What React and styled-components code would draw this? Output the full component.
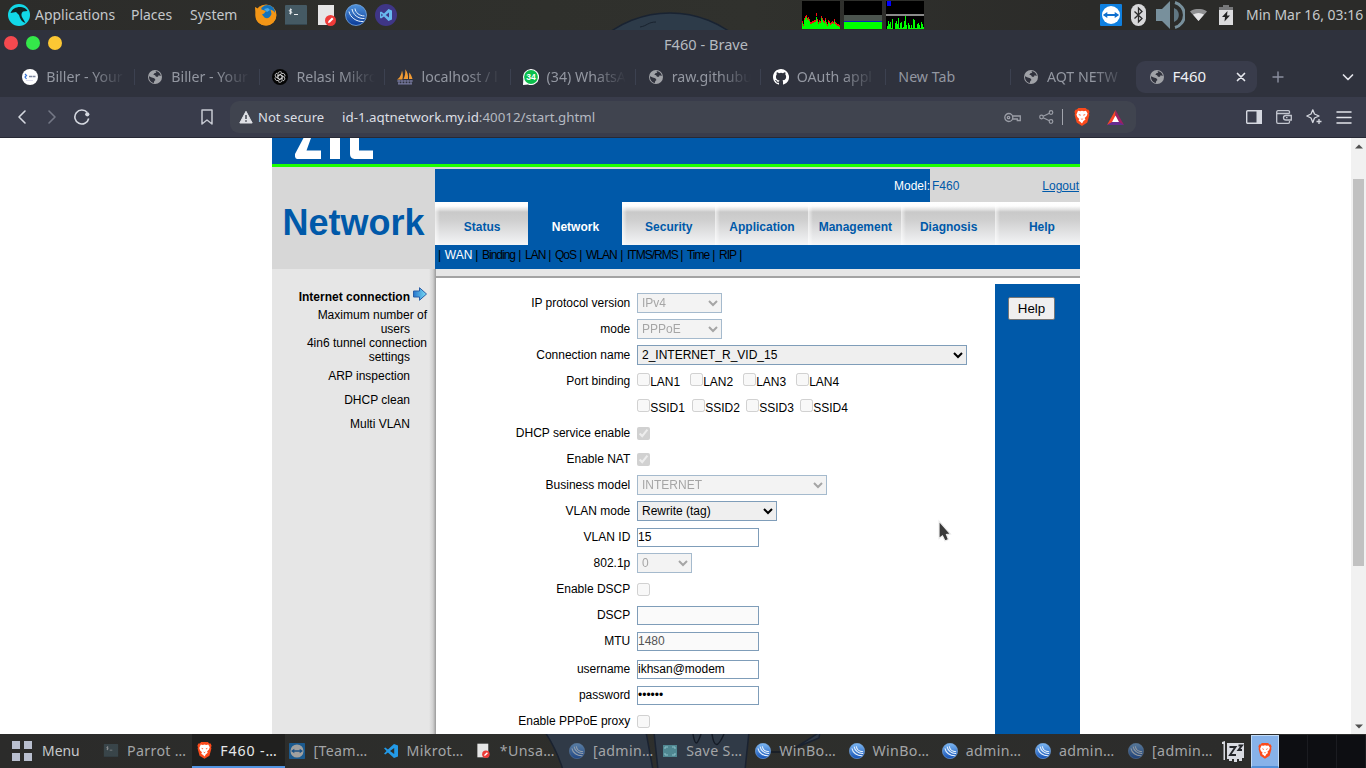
import React from 'react';
import styled, { createGlobalStyle, css } from 'styled-components';

const Global = createGlobalStyle`
  * { box-sizing: border-box; }
  body { margin: 0; overflow: hidden; background: #2d2e2b; }
`;
const ui = "'Noto Sans', sans-serif";
const web = "'Liberation Sans', Arial, sans-serif";

const Desktop = styled.div`
  width: 1366px; height: 768px; display: flex; flex-direction: column;
  font-family: ${ui}; position: relative; overflow: hidden;
`;
const Panel = styled.header`
  height: 30px; display: flex; align-items: center; position: relative;
  background: linear-gradient(90deg, #2c2c2a 0%, #2f302c 40%, #30312d 55%, #2b2b29 80%);
  color: #c5c8cb; font-size: 13.95px; padding: 0 4px 0 8px;
`;
const Wallpaper = styled.svg`position: absolute; left: 0; top: 0;`;
const PanelLogo = styled.span`display: flex; position: relative; flex: none;`;
const PanelMenu = styled.span`
  margin-left: ${p => p.$gap}px; width: ${p => p.$w}px; flex: none; white-space: nowrap; position: relative; line-height: 28px; padding-bottom: 1px;
`;
const Launchers = styled.div`display: flex; align-items: center; gap: 8px; margin-left: 17px; position: relative;`;
const PadSlot = styled.span`display: flex; width: 22px; padding-left: 3px; flex: none;`;
const Monitors = styled.div`display: flex; gap: 4px; position: relative; margin-left: auto; margin-right: 176px;`;
const Tray = styled.div`display: flex; align-items: center; position: relative; height: 30px;`;
const Clock = styled.span`margin-left: 13px; width: 116px; flex: none; white-space: nowrap; line-height: 28px; padding-bottom: 1px;`;

const Titlebar = styled.div`
  height: 30px; background: #2f323d; display: flex; align-items: flex-start; justify-content: center; position: relative;
  color: #b5bac0; font-size: 14.6px; padding-left: 46px; line-height: 28px;
`;
const Lights = styled.div`position: absolute; left: 4px; top: 6px; display: flex; gap: 8px;`;
const Light = styled.i`width: 14px; height: 14px; border-radius: 50%; background: ${p => p.$c};`;
const TabStrip = styled.nav`
  height: 37px; background: #2f323d; display: flex; padding: 1px 12px 4px 10.2px; align-items: center;
`;
const Tab = styled.div`
  width: ${p => (p.$active ? 121 : 125.1)}px; height: 32px;
  padding-left: ${p => (p.$active ? 12.5 : 12)}px; padding-right: ${p => (p.$active ? 11 : 10)}px; border-radius: 9px; display: flex; align-items: center; flex: none;
  color: ${p => (p.$active ? '#eef0f4' : '#9397a1')}; font-size: ${p => (p.$active ? 15 : 14.2)}px; position: relative;
  ${p => p.$active && css`background: #393c4b;`}
  ${p => p.$sep && css`&::after { content: ''; position: absolute; right: 0; top: 8px; height: 16px; width: 1px; background: #3c4150; }`}
`;
const TabTitle = styled.span`
  margin-left: ${p => (p.$bare ? 0.5 : 8)}px; flex: 1; overflow: hidden; white-space: nowrap; line-height: 29px; padding-bottom: 1px;
  ${p => p.$fade && css`mask-image: linear-gradient(90deg, #000 58%, transparent 100%);`}
`;
const StripTail = styled.div`display: flex; flex: 1; justify-content: space-between; padding-left: 15px; padding-top: 0;`;
const Toolbar = styled.div`
  height: 41px; background: #393c4b; border-bottom: 1px solid #272935; display: flex; align-items: center; padding: 0 14px;
`;
const NavIcons = styled.div`display: flex; width: 216px; align-items: center;`;
const Spacer = styled.div`width: ${p => p.$w}px; flex: none;`;
const UrlBar = styled.div`
  width: 906px; height: 32px; border-radius: 9px; background: #40444f; display: flex; align-items: center;
  padding: 0 12px 0 9px; color: #dcdfe4; font-size: 13.33px; line-height: 30px; white-space: nowrap;
`;
const Secure = styled.span`margin-left: 5px; width: 84px; font-size: 13px;`;
const Url = styled.span`flex: 1; span { color: #b5b9c1; }`;
const UrlIcons = styled.div`display: flex; align-items: center;`;
const Divider = styled.i`width: 1px; height: 16px; background: #a2a5ad; margin: 0 11px 0 8px;`;
const ToolIcons = styled.div`display: flex; gap: 14px; margin-left: auto; align-items: center;`;

const Viewport = styled.div`
  height: 596px; background: #fff; display: flex; justify-content: space-between; padding-left: 272px;
  font-family: ${web}; font-size: 12px; color: #000;
`;
const Site = styled.main`width: 808px; overflow: hidden;`;
const Banner = styled.div`height: 29px; background: #0059a9; border-bottom: 3px solid #1eff00; overflow: hidden; padding-left: 22.7px;`;
const Head = styled.div`height: 102px; background: #d7d7d7; display: flex; padding-top: 2px;`;
const HeadTitle = styled.h1`
  width: 163px; margin: 0; font-size: 36px; line-height: 100px; padding-top: 4px; text-align: center; color: #0059a9; font-weight: bold;
`;
const HeadMain = styled.div`width: 645px;`;
const ModelBar = styled.div`height: 33px; display: flex; color: #0059a9; line-height: 34px; justify-content: space-between; padding-right: 1px;`;
const ModelLabel = styled.span`width: 495px; background: #0059a9; color: #fff; text-align: right;`;
const ModelName = styled.span`flex: 1; padding-left: 2px;`;
const Logout = styled.a`text-decoration: underline;`;
const MainTabs = styled.div`height: 43px; display: flex; overflow: hidden;`;
const MainTab = styled.div`
  width: 93.3px; flex: none; text-align: center; font-weight: bold; line-height: 51px; padding-left: 1px; color: ${p => (p.$on ? '#fff' : '#0059a9')};
  background: ${p => (p.$on ? '#0059a9' : 'linear-gradient(90deg, rgba(255,255,255,.65), rgba(255,255,255,0) 5px), linear-gradient(#fff 0, #fdfdfd 4px, #dedede 8px, #c9c9c9 10px, #cfcfcf 18px, #f4f5f7 43px)')};
`;
const SubTabs = styled.div`height: 24px; background: #0059a9; display: flex; padding-left: 3px; line-height: 20px;`;
const SubTab = styled.span`
  width: ${p => p.$w}px; flex: none; display: flex; justify-content: space-between; letter-spacing: ${p => (p.$on ? 0 : -1)}px;
  color: ${p => (p.$on ? '#fff' : '#000')}; padding-right: 3.5px; white-space: nowrap;
  &::after { content: '|'; color: #000; letter-spacing: 0; }
`;
const Pipe = styled.span`width: 6.800px; flex: none;`;
const Body = styled.div`height: 465px; display: flex; background: #e6e6e6;`;
const Side = styled.aside`width: 164px; padding-top: 15px; background: linear-gradient(90deg, #e6e6e6 157px, #d0d0d0 161px, #9a9a9a 164px);`;
const SideItem = styled.div`
  height: ${p => (p.$two ? 28 : 24)}px; line-height: ${p => (p.$two ? 14 : p.$bold ? 26 : 24)}px; width: 138px;
  text-align: right; white-space: nowrap; position: relative; font-weight: ${p => (p.$bold ? 'bold' : 'normal')};
`;
const Overhang = styled.div`margin-right: -17px;`;
const Arrow = styled.svg`position: absolute; left: 141px; top: 3px;`;
const Content = styled.section`flex: 1; padding-top: 7px; display: flex; flex-direction: column;`;
const Sheet = styled.div`flex: 1; border-top: 2px solid #a3a3a3; background: #fff; display: flex;`;
const Form = styled.div`width: 559px; padding-top: 12px;`;
const HelpPane = styled.div`width: 85px; margin-top: 6px; background: #0059a9; padding: 13px;`;
const HelpButton = styled.button`
  width: 47px; height: 23px; padding: 0; font: 13.33px ${web}; background: #efefef; border: 1px solid #767676; border-radius: 2px; display: block;
`;
const Field = styled.div`height: 26px; display: flex; align-items: center; margin-top: ${p => (p.$gap ? 2 : 0)}px;`;
const Label = styled.label`width: 194.300px; margin-right: 6.700px; flex: none; text-align: right; line-height: 26px;`;
const Select = styled.select`
  width: ${p => p.$w}px; height: 20px; border: 1px solid #7f9db9; border-radius: 0; background-color: #efefef; font: 12px ${web}; margin: 0; padding: 0;
`;
const Input = styled.input`
  width: 122px; height: 19px; border: 1px solid #7f9db9; font: 12px ${web}; padding: 0 0 1px 0; margin: 1px 0 0; color: #000;
  background: #fff;
  &:disabled { background: #fafafa; color: #545454; }
`;
const Check = styled.input.attrs({ type: 'checkbox', disabled: true, readOnly: true })`
  width: 13px; height: 13px; margin: ${p => (p.$raised ? '0 0.2px 5px 0' : '1px 0 0')}; flex: none;
`;
const Option = styled.span`width: ${p => p.$w}px; display: flex; align-items: center; line-height: 26px; padding-top: 2px;`;
const Scrollbar = styled.div`width: 15px; background: #f1f1f1; display: flex; flex-direction: column; align-items: center; padding: 6px 0 5px;`;
const Thumb = styled.div`width: 11px; height: 387px; margin: 30px 0 auto; background: #c1c1c1;`;

const Taskbar = styled.footer`
  height: 34px; display: flex; position: relative; color: #c5c8cb; font-size: 14.2px;
  background: linear-gradient(90deg, #2b2b2a, #2e2f2c 50%, #2c2c2b 90%);
`;
const MenuButton = styled.div`width: 99px; flex: none; display: flex; align-items: center; padding-left: 12px; gap: 10px; position: relative; line-height: 31px; font-size: 13.95px; span { padding-bottom: 2px; }`;
const Task = styled.div`
  width: 93.2px; height: 34px; padding-left: 4px; display: flex; align-items: center; gap: 8px; flex: none; position: relative; white-space: nowrap;
  color: ${p => (p.$on ? '#e6e8ea' : '#a3a5a7')}; border-bottom: 2px solid ${p => (p.$on ? '#5294e2' : 'transparent')};
  background: ${p => (p.$on ? '#20201f' : 'transparent')}; line-height: 31px; padding-top: 1px;
  letter-spacing: ${p => (p.$on ? 0.9 : 0.35)}px;
  svg { opacity: ${p => (p.$dim ? 0.55 : 1)}; }
`;
const Zz = styled.div`width: 29px; flex: none; margin-left: 4.600px; display: flex; align-items: center; position: relative;`;
const Workspace = styled.div`
  width: ${p => (p.$on ? 28 : 29)}px; height: 33px; margin-top: 1px; position: relative; display: flex; justify-content: center; align-items: center; flex: none;
  background: ${p => (p.$on ? '#87b2e9' : '#0d0e12')}; border: ${p => (p.$on ? '1px solid #c2dbf6' : '0')};
  border-bottom: ${p => (p.$on ? '2px solid #4f8ed8' : '0')};
  border-right: ${p => (p.$on ? '1px solid #c2dbf6' : '1px solid #1b1c21')};
`;
const Cursor = styled.svg`position: absolute; left: 936px; top: 519px;`;

/* ---------- icons ---------- */
const Brave = ({ s = 16 }) => (
  <svg width={s} height={s * 1.12} viewBox="0 0 16 18">
    <path d="M4.400 0h7.200l1.500 1.600 1.500.1 1 2.200-.6 1.700.4 1.400-2.100 7.700L8 18l-5.300-3.300L.6 7 1 5.600.4 3.900l1-2.200 1.500-.1z" fill="#fb4a1b" />
    <path d="M4 2.800l2.200.5L8 2.700l1.800.6 2.200-.5 1.600 2.700-.9 2.600-2 2 .8 1.500-2 1.400L8 15.600l-1.500-1.600-2-1.400.8-1.500-2-2-.9-2.600z" fill="#fff" />
    <path d="M4.300 6.100l2.400.8-.5 1.100zM11.700 6.100l-2.400.8.5 1.100zM6.600 10.300L8 11l1.400-.7L8 12z" fill="#fb4a1b" />
  </svg>
);
const Globe = () => (
  <svg width="16" height="16" viewBox="0 0 16 16">
    <circle cx="8" cy="8" r="7" fill="#a0a2a7" />
    <path d="M8.500 2c2.600.1 5 2.300 5.300 5l-2.200-.7-.6 1.500-2-.1-.9-1.500-1.800-.5 1.400-1.600 1.600-.4zM2 7.200l2.800 1.300 2.500.8 1.200 1.700-1.200 1-.5 1.900C4.100 13.600 2 11 2 8z" fill="#30323d" />
  </svg>
);
const Winbox = ({ s = 16, deep }) => {
  const id = deep ? 'wbDeep' : 'wb';
  return (
    <svg width={s} height={s} viewBox="0 0 22 22">
      <defs><linearGradient id={id} x1="0" y1="0" x2="0" y2="1"><stop offset="0" stopColor={deep ? '#4f93dc' : '#7cb8f4'} /><stop offset="1" stopColor={deep ? '#0a3a96' : '#1450b4'} /></linearGradient></defs>
      <circle cx="11" cy="11" r="10.500" fill={`url(#${id})`} stroke="#79a9e0" strokeWidth=".8" />
      <path d="M4 7.500c1 5.500 7 10.500 14.500 10M7 5c1 5.500 6 10 12.500 9.500M10 4.500c.5 4 4 7.300 9.500 7.500" fill="none" stroke="#e8f3ff" strokeWidth={deep ? 1 : 1.4} />
    </svg>
  );
};
const Pad = ({ w = 18, h = 22 }) => (
  <svg width={w} height={h} viewBox="0 0 18 22">
    <path d="M0 1h16v20H0z" fill="#e6e6e6" /><circle cx="12.500" cy="16.500" r="5.500" fill="#ee3b38" />
    <path d="M10 19l.5-2 3.500-3.500 1.500 1.500-3.500 3.500z" fill="#fff" />
  </svg>
);
const Term = ({ s = 22, h = 20 }) => (
  <svg width={s} height={h} viewBox="0 0 22 20">
    <rect width="22" height="20" rx="1" fill="#455a64" /><path d="M0 19h22v1H0z" fill="#34464f" />
    <path d="M7 4.800H5.200c-1.200 0-1.200 1.700 0 1.700h.7c1.200 0 1.200 1.700 0 1.700H4.200M5.600 3.500v6M9 9.500h4" stroke="#eceff1" fill="none" />
  </svg>
);
const Teamv = ({ s = 22 }) => (
  <svg width={s} height={s} viewBox="0 0 22 22">
    <rect width="22" height="22" rx="1" fill="#0f80e0" /><circle cx="11" cy="11" r="9" fill="#fff" />
    <path d="M2.800 11l4.500-3v2h7.400V8l4.500 3-4.500 3v-2H7.300v2z" fill="#0f6fce" />
  </svg>
);
const Line = ({ d, w = 16, h = w, vb = '0 0 16 16', c = '#d5d8e0', sw = 1.4, fill = 'none' }) => (
  <svg width={w} height={h} viewBox={vb} fill={fill} stroke={c} strokeWidth={sw} strokeLinecap="round" strokeLinejoin="round"><path d={d} /></svg>
);
const Vs = ({ s = 14 }) => (
  <svg width={s} height={s} viewBox="0 0 14 14"><path d="M10 0l4 1.500v11L10 14 3.900 8.500 1.300 10.500 0 9.800 2.500 7 0 4.200l1.300-.7 2.600 2zM10.200 4L6 7l4.200 3z" fill="#239ae8" fillRule="evenodd" /></svg>
);
const IconBox = styled.span`width: 16px; display: flex; justify-content: center;`;

const cpu = [6, 3, 9, 11, 12, 9, 10, 8, 5, 5, 6, 6, 7, 7, 14, 8, 5, 7, 6, 11, 9, 7, 6, 9, 5, 3, 7, 6, 4, 5, 6, 5, 8, 5, 4, 3, 3, 2];
const net = [0, 3, 8, 5, 7, 1, 10, 0, 0, 6, 8, 5, 11, 1, 6, 7, 1, 2, 8, 13, 4, 0, 6, 4, 1, 4, 1, 10, 9, 1, 1, 5, 6, 4, 1, 7, 5, 2];

const tabs = [
  ['Biller - Your', <svg width="16" height="16"><circle cx="8" cy="8" r="8" fill="#fff" /><path d="M3 5l1.500 1.500L3 8l1.500 2" stroke="#3875d7" fill="none" strokeWidth="1.200" /><path d="M7 7.500h7" stroke="#7d86a0" strokeWidth="1.300" strokeDasharray="3 .5" /><path d="M4 11.500h7" stroke="#dde" /></svg>],
  ['Biller - Your', <Globe />],
  ['Relasi Mikro', <svg width="16" height="16" viewBox="0 0 16 16"><circle cx="8" cy="8" r="8" fill="#050505" /><g fill="none" stroke="#dedede" strokeWidth=".8">{[0, 60, 120, 180, 240, 300].map(a => <path key={a} transform={`rotate(${a} 8 8)`} d="M6 8V4.500a2.200 2.200 0 0 1 4-.8M8 5.700l3 1.700" />)}</g></svg>],
  ['localhost / l', <svg width="16" height="16" viewBox="0 0 16 16"><path d="M0 10.500C3 9 4.500 5 5 1.500c1 3 1.200 6 .4 9zM6.500 10C8 7 8.500 4 8.300.2 10.500 3 11.400 6 11 10zM12 10l.2-6.500C14 5.500 15 8 15.500 10z" fill="#f29b34" /><path d="M0 12h16M1 14.800h14M2 11v4.500M5 11v4.500M8 11v4.500M11 11v4.500M14 11v4.500" stroke="#77799f" strokeWidth="1.200" /></svg>],
  ['(34) WhatsA', <svg width="16" height="16" viewBox="0 0 16 16"><path d="M0 16l.3-6A8 8 0 1 1 5 15.400z" fill="#fff" /><circle cx="8" cy="8" r="6.900" fill="#0cbf4c" /><text x="8" y="11" fontSize="8.500" fontWeight="bold" fontFamily="Liberation Sans" textAnchor="middle" fill="#fff">34</text></svg>],
  ['raw.githubu', <Globe />],
  ['OAuth appl', <svg width="16" height="16" viewBox="0 0 16 16"><path fill="#fff" d="M8 0C3.580 0 0 3.580 0 8c0 3.540 2.290 6.530 5.470 7.590.4.070.55-.17.55-.38v-1.490c-2.010.37-2.530-.49-2.690-.94-.09-.23-.48-.94-.82-1.130-.28-.15-.68-.52-.01-.53.63-.01 1.080.58 1.230.82.72 1.210 1.870.87 2.330.66.07-.52.28-.87.51-1.070-1.780-.2-3.640-.89-3.640-3.950 0-.87.31-1.590.82-2.150-.08-.2-.36-1.020.08-2.120 0 0 .67-.21 2.200.82a7.600 7.600 0 0 1 4 0c1.530-1.040 2.200-.82 2.200-.82.44 1.100.16 1.920.08 2.120.51.56.82 1.270.82 2.150 0 3.070-1.870 3.750-3.650 3.950.29.25.54.73.54 1.480v2.200c0 .21.15.46.55.38A8 8 0 0 0 8 0z" /></svg>],
  ['New Tab', null],
  ['AQT NETW', <Globe />],
];
const tasks = [
  ['Parrot …', <Term s={16} h={13} />, 1], ['F460 -…', <IconBox><Brave s={15} /></IconBox>, 0], ['[Team…', <Teamv s={16} />, 1],
  ['Mikrot…', <IconBox><Vs s={14} /></IconBox>, 0], ['*Unsa…', <IconBox><Pad w={13} h={15} /></IconBox>, 0], ['[admin…', <Winbox />, 1],
  ['Save S…', <svg width="16" height="16"><path d="M1 2h14v12H1z" fill="#4f8791" /><path d="M3 6V4h3M10 4h3v2M3 10v2h3M10 12h3v-2" stroke="#8cc2ca" fill="none" /></svg>, 0],
  ['WinBo…', <Winbox />, 0], ['WinBo…', <Winbox />, 0], ['admin…', <Winbox />, 0], ['admin…', <Winbox />, 0], ['[admin…', <Winbox />, 1],
];

const Row = ({ label, gap, children }) => <Field $gap={gap}><Label>{label}</Label>{children}</Field>;
const Pick = ({ w, value, off }) => <Select $w={w} disabled={off}><option>{value}</option></Select>;

export default function App() {
  return (
    <Desktop>
      <Global />
      <Panel>
        <Wallpaper width="1366" height="30"><circle cx="670" cy="117" r="104" fill="#2d3b49" stroke="#192332" strokeWidth="1.500" /><path d="M640 27c7-1 8-5 16-5" stroke="#18222e" fill="none" /></Wallpaper>
        <PanelLogo><svg width="22" height="22" viewBox="0 0 22 22"><circle cx="11" cy="11" r="11" fill="#12d8e8" /><path d="M2.500 9C4 4.500 9 2.500 13 3c3 .3 5.500 2 6.500 4l-4.500.5c-2 1.500-2 4-.5 6.500l3 5c-3.500-1-5.500-4-6.500-8L8 8z" fill="#102324" /></svg></PanelLogo>
        <PanelMenu $gap={5} $w={80}>Applications</PanelMenu>
        <PanelMenu $gap={16} $w={43}>Places</PanelMenu>
        <PanelMenu $gap={16} $w={48}>System</PanelMenu>
        <Launchers>
          <svg width="22" height="22" viewBox="0 0 22 22"><circle cx="11" cy="11" r="10.500" fill="#f39616" /><circle cx="12.500" cy="8.500" r="7.500" fill="#1273bd" /><path d="M0 3l3 1.500L5 2l1.500 3.500L11 7 9 9.500l-2 1 2.500 3c3 2 6-.5 7-3.500l-1-4.500 3 1.500L21 10c1 6-4 11.500-10 11.500S0 17 .5 11z" fill="#f39616" /><path d="M9 5l4-1 2 2-3 2zM15 12l3-3" fill="#49a9e5" /></svg>
          <Term />
          <PadSlot><Pad /></PadSlot>
          <Winbox s={22} deep />
          <svg width="22" height="22" viewBox="0 0 22 22"><circle cx="11" cy="11" r="11" fill="#3f3686" /><path d="M13.500 5l3.500 1.500v9L13.500 17 9 12.500 6 14.500l-1-.7V8.200l1-.7 3 2zM6.300 9.500v3L8 11zM14 8.500L10.700 11l3.300 2.500z" fill="#68b9ee" fillRule="evenodd" /></svg>
        </Launchers>
        <Monitors>
          <svg width="38" height="28" shapeRendering="crispEdges"><rect width="38" height="28" fill="#000" />{cpu.map((v, i) => <g key={i}><rect x={i} y={28 - v - 2} width="1" height="3" fill="#f01010" /><rect x={i} y={28 - v + (i === 14 ? 2 : 0)} width="1" height={v} fill="#0f0" /></g>)}</svg>
          <svg width="38" height="28" shapeRendering="crispEdges"><rect width="38" height="28" fill="#000" /><rect y="14" width="38" height="6" fill="#4b544e" /><rect y="20" width="38" height="1" fill="#1020c0" /><rect y="21" width="38" height="7" fill="#0f0" /></svg>
          <svg width="38" height="28" shapeRendering="crispEdges"><rect width="38" height="28" fill="#000" /><rect x="1" width="4" height="5" fill="#00f" /><rect y="13" width="38" height="2" fill="#8a8a8a" />{net.map((v, i) => <rect key={i} x={i} y={28 - v} width="1" height={v} fill="#0f0" />)}</svg>
        </Monitors>
        <Tray>
          <Teamv />
          <Spacer $w={9} />
          <svg width="15" height="22" viewBox="0 0 15 22"><rect width="15" height="22" rx="7.500" fill="#d8d8da" /><path d="M3.500 7.500l7.500 7-3.500 3.500V4l3.500 3.500-7.500 7" fill="none" stroke="#2b2b2b" strokeWidth="1.300" /></svg>
          <Spacer $w={10} />
          <svg width="29" height="28" viewBox="0 0 29 28"><path d="M0 8h6l8-8v28l-8-8H0z" fill="#78909c" /><path d="M18 7a7.500 7.500 0 0 1 0 14z" fill="#607783" /><path d="M19 1.500a13 13 0 0 1 0 25" stroke="#78909c" strokeWidth="3" fill="none" /></svg>
          <Spacer $w={5} />
          <svg width="17" height="12" viewBox="0 0 17 12"><path d="M0 2.500C5-1 12-1 17 2.500L8.500 12z" fill="#8f9092" /><path d="M3 5.500C6.500 3.500 10.500 3.500 14 5.500L8.500 12z" fill="#e4e4e6" /></svg>
          <Spacer $w={12} />
          <svg width="14" height="20" viewBox="0 0 14 20"><path d="M4 0h6v2h4v4H0V2h4z" fill="#77787a" /><path d="M0 5h14v15H0z" fill="#dcdcde" /><path d="M8.500 6L3 12h3l-.5 4.500L11 10.500H8z" fill="#222" /></svg>
          <Clock>Min Mar 16, 03:16</Clock>
        </Tray>
      </Panel>

      <Titlebar>
        <Lights><Light $c="#f5494f" /><Light $c="#34e84a" /><Light $c="#fcc734" /></Lights>
        F460 - Brave
      </Titlebar>
      <TabStrip>
        {tabs.map(([t, icon], i) => <Tab key={i} $sep={i < 8}>{icon}<TabTitle $fade={i !== 7} $bare={!icon}>{t}</TabTitle></Tab>)}
        <Tab $active><Globe /><TabTitle>F460</TabTitle><Line w={10} vb="0 0 10 10" d="M1.500 1.500l7 7M8.500 1.500l-7 7" sw={1.700} c="#e6e8ee" /></Tab>
        <StripTail><Line w={12} vb="0 0 12 12" d="M6 1v10M1 6h10" c="#8c90a0" /><Line w={12} vb="0 0 12 12" d="M1.500 4L6 8.500 10.500 4" c="#e0e2e8" sw={1.700} /></StripTail>
      </TabStrip>
      <Toolbar>
        <NavIcons>
          <Line d="M11 2L5 8l6 6" sw={1.600} />
          <Spacer $w={14} />
          <Line d="M5 2l6 6-6 6" c="#747886" sw={1.600} />
          <Spacer $w={14} />
          <svg width="16" height="16" viewBox="0 0 16 16"><path d="M13.300 3.600A7 7 0 1 0 14.700 9.500" fill="none" stroke="#d5d8e0" strokeWidth="1.600" /><circle cx="13.300" cy="5.300" r="2.100" fill="#d5d8e0" /></svg>
          <Spacer $w={109} />
          <Line d="M3 1h10v14l-5-4-5 4z" c="#c6c9d2" sw={1.500} />
        </NavIcons>
        <UrlBar>
          <svg width="14" height="14" viewBox="0 0 14 14"><path d="M7 1.300L13.200 13H.8z" fill="#dfe1e6" stroke="#dfe1e6" strokeLinejoin="round" /><path d="M7 5v4M7 10.300v1.400" stroke="#40444f" strokeWidth="1.500" /></svg>
          <Secure>Not secure</Secure>
          <Url>id-1.aqtnetwork.my.id<span>:40012/start.ghtml</span></Url>
          <UrlIcons>
            <svg width="17" height="11" viewBox="0 0 17 11" fill="none" stroke="#9a9da6" strokeWidth="1.300"><circle cx="4.800" cy="5.500" r="4" /><circle cx="4.500" cy="5.500" r="1.200" /><path d="M8.500 4h7.800v4.500h-3V7h-4.800" /></svg>
            <Spacer $w={18} />
            <svg width="15" height="14" viewBox="0 0 15 14" fill="none" stroke="#9a9da6" strokeWidth="1.200"><circle cx="2.500" cy="7" r="1.800" /><circle cx="12" cy="2.500" r="1.800" /><circle cx="12" cy="11.500" r="1.800" /><path d="M4.200 6.200L10.400 3.300M4.200 7.800l6.200 2.900" /></svg>
            <Divider />
            <Brave s={16} />
            <Spacer $w={17} />
            <svg width="17" height="15" viewBox="0 0 17 15"><path d="M8.500 0L0 15l8.500-4z" fill="#fa4628" /><path d="M8.500 0L17 15l-8.500-4z" fill="#9e1f63" /><path d="M0 15h17l-8.500-5z" fill="#662d91" /><path d="M8.500 5.500L12 12H5z" fill="#fff" /></svg>
          </UrlIcons>
        </UrlBar>
        <ToolIcons>
          <svg width="16" height="14" viewBox="0 0 16 14"><rect x=".7" y=".7" width="14.600" height="12.600" rx="1" fill="none" stroke="#d5d8e0" strokeWidth="1.400" /><path d="M10.500 0H16v14h-5.500z" fill="#d5d8e0" /></svg>
          <svg width="16" height="14" viewBox="0 0 16 14" fill="none" stroke="#c3c6cf" strokeWidth="1.300"><path d="M13.500 3.500V2q0-1.300-1.300-1.300H2Q.7.700.7 2.200V12Q.7 13.300 2 13.300h10.200q1.300 0 1.300-1.300v-1M.7 3.500h12.800M15.300 5.500H10q-2.500 0-2.500 2.200T10 10h5.300zM10 7.700h1.500" /></svg>
          <svg width="16" height="16" viewBox="0 0 16 16" fill="none" stroke="#d5d8e0" strokeWidth="1.300" strokeLinejoin="round"><path d="M6.800.8L8.500 5l4.500 2-4.500 2-1.700 4.500L5 9 .8 7 5 5zM13 10v5M10.500 12.500h5" /></svg>
          <Line w={16} h={14} vb="0 0 16 14" d="M1 2h14M1 7.500h14M1 13h14" c="#e2e4ea" sw={1.500} />
        </ToolIcons>
      </Toolbar>

      <Viewport>
        <Site>
          <Banner>
            <svg width="80" height="26"><path d="M8.500 0h7.500l-4.500 12.500h14.500V21H2q-2.500-.5-2-5zM35 0h10v21H35zM55 0h9v12.500h14V21H59.500q-4.500-.5-4.500-5z" fill="#fff" /></svg>
          </Banner>
          <Head>
            <HeadTitle>Network</HeadTitle>
            <HeadMain>
              <ModelBar><ModelLabel>Model:</ModelLabel><ModelName>F460</ModelName><Logout>Logout</Logout></ModelBar>
              <MainTabs>{['Status', 'Network', 'Security', 'Application', 'Management', 'Diagnosis', 'Help'].map(t => <MainTab key={t} $on={t === 'Network'}>{t}</MainTab>)}</MainTabs>
              <SubTabs>
                <Pipe>|</Pipe>
                {[['WAN', 37.2], ['Binding', 43], ['LAN', 30], ['QoS', 31], ['WLAN', 41], ['ITMS/RMS', 60], ['Time', 32], ['RIP', 27]].map(([t, w]) => <SubTab key={t} $w={w} $on={t === 'WAN'}>{t}</SubTab>)}
              </SubTabs>
            </HeadMain>
          </Head>
          <Body>
            <Side>
              <SideItem $bold>Internet connection
                <Arrow width="14" height="14" viewBox="0 0 14 14"><defs><linearGradient id="ar"><stop offset="0" stopColor="#2674cc" /><stop offset="1" stopColor="#7be0f5" /></linearGradient></defs><path d="M.5 4h6V.7L13.500 7l-7 6.300V10h-6z" fill="url(#ar)" stroke="#2a5fa8" /></Arrow>
              </SideItem>
              <SideItem $two><Overhang>Maximum number of</Overhang>users</SideItem>
              <SideItem $two><Overhang>4in6 tunnel connection</Overhang>settings</SideItem>
              <SideItem>ARP inspection</SideItem>
              <SideItem>DHCP clean</SideItem>
              <SideItem>Multi VLAN</SideItem>
            </Side>
            <Content>
              <Sheet>
                <Form>
                  <Row label="IP protocol version"><Pick w={85} value="IPv4" off /></Row>
                  <Row label="mode"><Pick w={85} value="PPPoE" off /></Row>
                  <Row label="Connection name"><Pick w={330} value="2_INTERNET_R_VID_15" /></Row>
                  <Row label="Port binding">{[1, 2, 3, 4].map(n => <Option key={n} $w={53}><Check $raised />LAN{n}</Option>)}</Row>
                  <Row>{[1, 2, 3, 4].map(n => <Option key={n} $w={n === 1 ? 55 : 54}><Check $raised />SSID{n}</Option>)}</Row>
                  <Row label="DHCP service enable"><Check checked /></Row>
                  <Row label="Enable NAT"><Check checked /></Row>
                  <Row label="Business model"><Pick w={190} value="INTERNET" off /></Row>
                  <Row label="VLAN mode"><Pick w={140} value="Rewrite (tag)" /></Row>
                  <Row label="VLAN ID"><Input defaultValue="15" /></Row>
                  <Row label="802.1p"><Pick w={55} value="0" off /></Row>
                  <Row label="Enable DSCP"><Check /></Row>
                  <Row label="DSCP"><Input disabled /></Row>
                  <Row label="MTU"><Input disabled defaultValue="1480" /></Row>
                  <Row label="username" gap><Input defaultValue="ikhsan@modem" /></Row>
                  <Row label="password"><Input type="password" defaultValue="secret" /></Row>
                  <Row label="Enable PPPoE proxy"><Check /></Row>
                </Form>
                <HelpPane><HelpButton>Help</HelpButton></HelpPane>
              </Sheet>
            </Content>
          </Body>
        </Site>
        <Scrollbar>
          <svg width="8" height="5"><path d="M0 4.500L4 .5l4 4z" fill="#505050" /></svg>
          <Thumb />
          <svg width="8" height="5"><path d="M0 .5h8l-4 4z" fill="#505050" /></svg>
        </Scrollbar>
      </Viewport>

      <Taskbar>
        <Wallpaper width="1366" height="34"><g fill="#303a47" stroke="#1a2230" strokeWidth="1.500"><path d="M545-2c8 12 13 22 18 38h90l-7-38z" /><path d="M654-2l4 38h87l4-38z" /><path d="M820-2l-25 16 24-10z" /></g><path d="M693 0c2 12 4 12 8 0M712 0c2 14 6 14 12 0M770 18h20" stroke="#151b26" fill="none" strokeWidth="1.500" /></Wallpaper>
        <MenuButton><svg width="20" height="20"><path d="M0 0h8v8H0zM12 0h8v8h-8zM0 12h8v8H0zM12 12h8v8h-8z" fill="#b9bfcf" /></svg><span>Menu</span></MenuButton>
        {tasks.map(([t, icon, dim], i) => <Task key={i} $on={i === 1} $dim={dim}>{icon}{t}</Task>)}
        <Zz><svg width="22" height="21" viewBox="0 0 22 21"><path d="M0 1l3-1v19H1.500V3H0zM5 2h17v15h-2v3h-3v-2h-2v3h-3v-3h-2v2H7v-2H5z" fill="#d9dbe2" /><path d="M7.500 6h6L8 14h6M16.500 4.500h3.500L16.500 9H20" fill="none" stroke="#24262b" strokeWidth="1.900" /></svg></Zz>
        <Workspace $on><Brave s={14} /></Workspace>
        <Workspace /><Workspace /><Workspace />
      </Taskbar>
      <Cursor width="17" height="26" viewBox="0 0 17 26"><path d="M3 2v17.500l3.500-2.500 2.500 5 3.500-1.500-2-5 4-.5z" fill="#3a3a3a" stroke="#eee" strokeWidth="1.200" /></Cursor>
    </Desktop>
  );
}
